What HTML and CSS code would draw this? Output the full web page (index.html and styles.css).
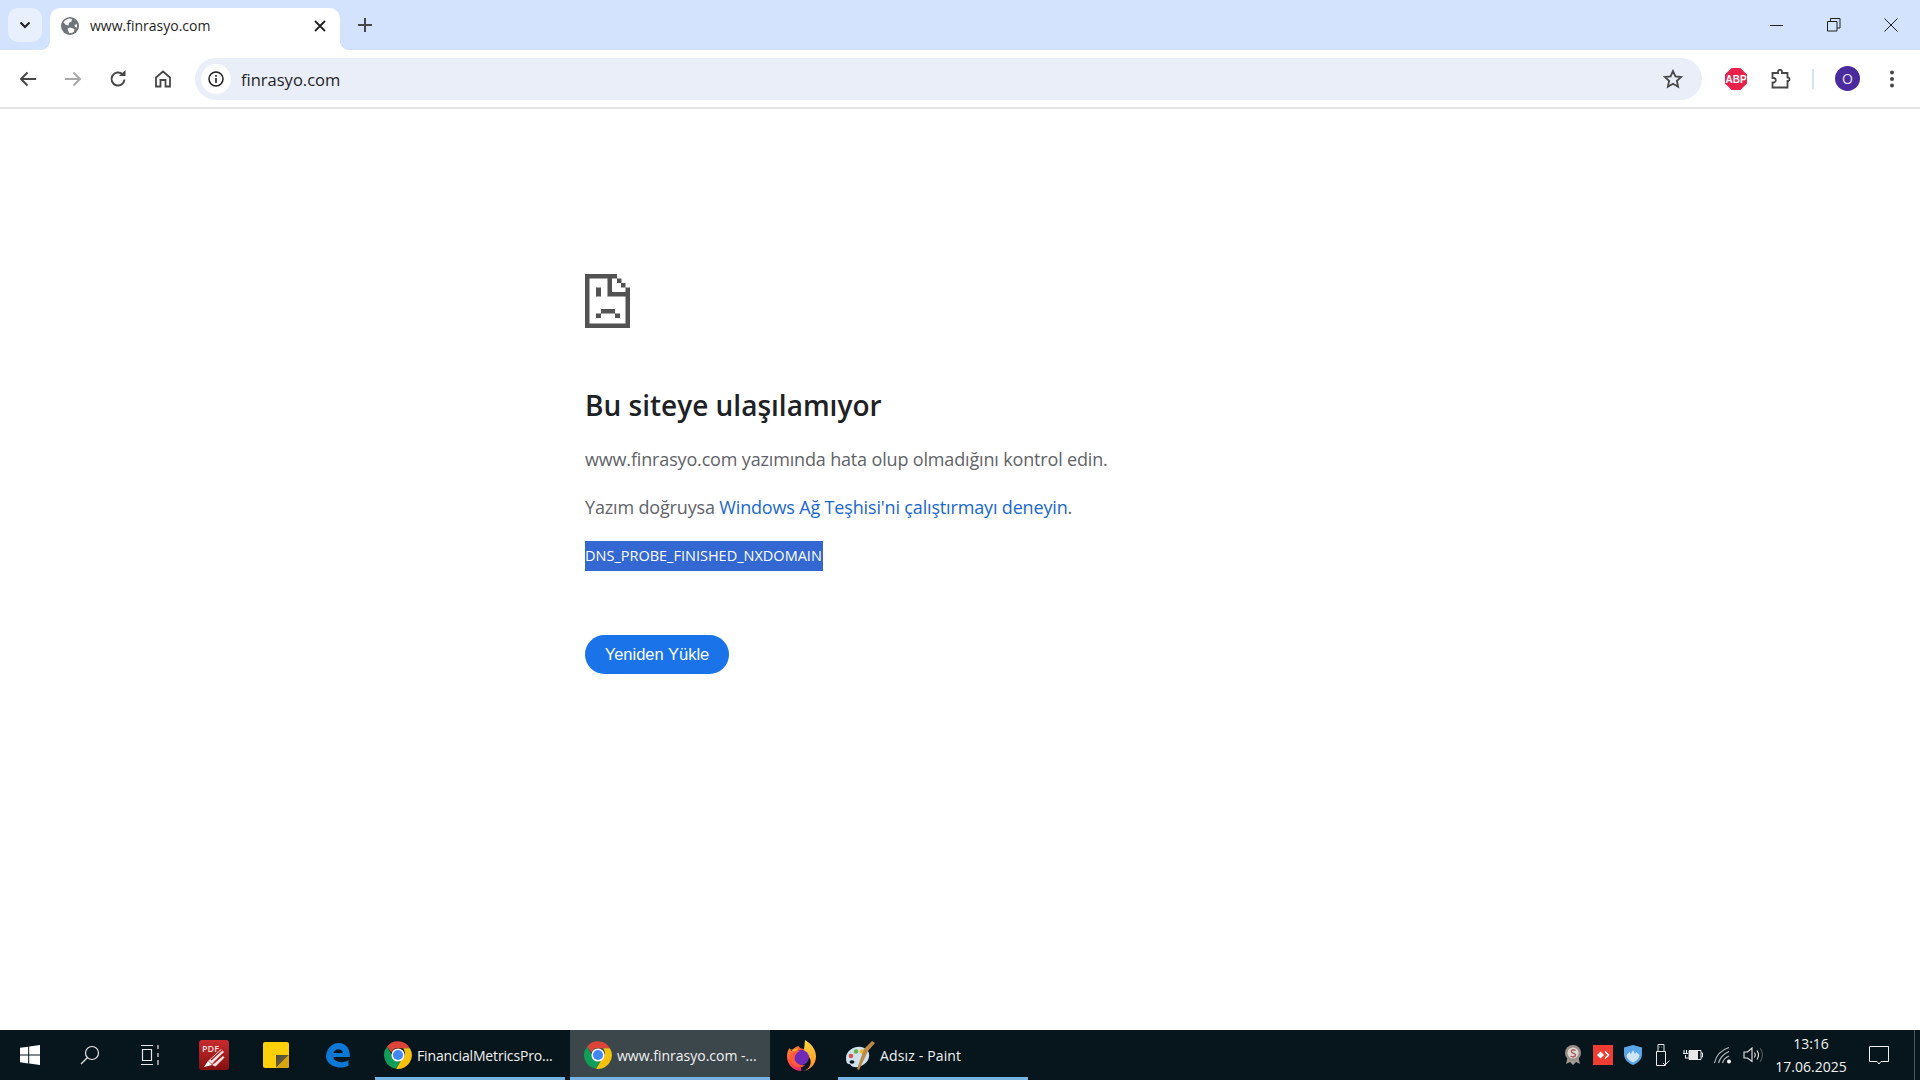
FILE: index.html
```html
<!DOCTYPE html>
<html lang="tr">
<head>
  <meta charset="UTF-8">
  <title>www.finrasyo.com</title>
  <link rel="stylesheet" href="styles.css">
</head>
<body>
  <svg class="defs" width="0" height="0">
    <defs>
      <linearGradient id="pdfRed" x1="0" y1="0" x2="0" y2="1"><stop offset="0" stop-color="#c92b2e"/><stop offset="1" stop-color="#85100f"/></linearGradient>
      <linearGradient id="foxBody" x1="0" y1="0" x2="0.7" y2="1"><stop offset="0" stop-color="#ff9a2e"/><stop offset="0.55" stop-color="#ff4a3d"/><stop offset="1" stop-color="#e3257d"/></linearGradient>
      <linearGradient id="foxTop" x1="0.5" y1="0" x2="0.6" y2="1"><stop offset="0" stop-color="#ffd83a"/><stop offset="1" stop-color="#ff8a2a"/></linearGradient>
      <linearGradient id="stickyFold" x1="0" y1="0" x2="1" y2="1"><stop offset="0" stop-color="#4a4a48"/><stop offset="1" stop-color="#8a6d1c"/></linearGradient>
    </defs>
    <symbol id="chrome" viewBox="0 0 48 48">
      <path fill="#db4437" d="M24 2a22 22 0 0 1 19 11H24a11 11 0 0 0-10.500 7.500L6.500 10.500A22 22 0 0 1 24 2z"/>
      <path fill="#0f9d58" d="M6.500 10.500l9.700 17A11 11 0 0 0 28 34.300L21 46A22 22 0 0 1 6.500 10.500z"/>
      <path fill="#f4c20d" d="M43 13a22 22 0 0 1-22 33l10-17a11 11 0 0 0 1-16z"/>
      <circle cx="24" cy="24" r="10.500" fill="#fff"/>
      <circle cx="24" cy="24" r="8" fill="#4285f4"/>
    </symbol>
  </svg>

  <div class="tabstrip">
    <div class="tab-search">
      <svg width="14" height="14" viewBox="0 0 14 14"><path d="M2.500 4.500L7 9l4.500-4.500" fill="none" stroke="#1f1f1f" stroke-width="2"/></svg>
    </div>
    <div class="tab">
      <svg class="favicon" width="18" height="18" viewBox="0 0 18 18"><circle cx="9" cy="9" r="9" fill="#70757a"/><path fill="#fff" d="M8 1.500C6 2 3.500 3.500 2.500 5.500L5 8l2.500.5L8 6l2.500-1.500L11 2zM9 10.500l-2.500 1 1.500 4.500c2 .3 3.500-.2 5-1.200l.5-2.800zM16 7l-2.500 1 .5 2 2 .5z"/></svg>
      <span class="tab-title">www.finrasyo.com</span>
      <svg class="tab-close" width="12" height="12" viewBox="0 0 12 12"><path d="M1 1l10 10M11 1L1 11" stroke="#1f1f1f" stroke-width="1.800"/></svg>
    </div>
    <svg class="new-tab" width="14" height="14" viewBox="0 0 14 14"><path d="M7 0v14M0 7h14" stroke="#474747" stroke-width="2"/></svg>
    <div class="win-controls">
      <svg width="14" height="14" viewBox="0 0 14 14"><path d="M0 7.500h13" stroke="#1f1f1f"/></svg>
      <svg width="14" height="14" viewBox="0 0 14 14"><path d="M.5 3.500h9.500v9.500H.5zM3.500 3.500V.5h9.500v9.500H10" fill="none" stroke="#1f1f1f"/></svg>
      <svg width="14" height="14" viewBox="0 0 14 14"><path d="M.5.500l13 13M13.500.5l-13 13" stroke="#1f1f1f"/></svg>
    </div>
  </div>

  <div class="toolbar">
    <div class="nav-btn">
      <svg width="18" height="16" viewBox="0 0 18 16"><path d="M17 8H2M8.500 1.500L2 8l6.500 6.500" fill="none" stroke="#474747" stroke-width="2"/></svg>
    </div>
    <div class="nav-btn">
      <svg width="18" height="16" viewBox="0 0 18 16"><path d="M1 8h15M9.500 1.500L16 8l-6.500 6.500" fill="none" stroke="#a8a8a8" stroke-width="2"/></svg>
    </div>
    <div class="nav-btn">
      <svg width="18" height="18" viewBox="0 0 18 18"><path d="M15.500 9.500A6.500 6.500 0 1 1 13.500 4.300" fill="none" stroke="#474747" stroke-width="2"/><path d="M10 6h6.500V0z" fill="#474747"/></svg>
    </div>
    <div class="nav-btn">
      <svg width="18" height="18" viewBox="0 0 18 18"><path d="M2 7.500L9 1.500l7 6V16.500h-4.500V10h-5v6.500H2z" fill="none" stroke="#474747" stroke-width="1.800"/></svg>
    </div>
    <div class="omnibox">
      <div class="site-info">
        <svg width="16" height="16" viewBox="0 0 16 16"><circle cx="8" cy="8" r="7" fill="none" stroke="#1f1f1f" stroke-width="1.500"/><path d="M8 7v5M8 4v1.800" stroke="#1f1f1f" stroke-width="1.600"/></svg>
      </div>
      <span class="url">finrasyo.com</span>
      <svg class="star" width="20" height="20" viewBox="0 0 20 20"><path d="M10 2l2.400 5.400 5.800.6-4.300 3.900 1.200 5.800L10 14.700l-5.100 3 1.200-5.800L1.800 8l5.800-.6z" fill="none" stroke="#474747" stroke-width="1.800"/></svg>
    </div>
    <div class="toolbar-end">
      <div class="abp">ABP</div>
      <svg class="ext" width="20" height="20" viewBox="0 0 20 20"><path d="M1.500 4H7V2.800a2 2 0 0 1 4 0V4h5.500v4.500h1a2 2 0 0 1 0 3.500h-1v6.500H1.500v-5H3a2.300 2.300 0 0 0 0-4.500H1.500z" fill="none" stroke="#474747" stroke-width="1.800"/></svg>
      <div class="tb-sep"></div>
      <div class="avatar">O</div>
      <svg class="menu" width="6" height="18" viewBox="0 0 6 18"><circle cx="3" cy="2.500" r="2" fill="#474747"/><circle cx="3" cy="9" r="2" fill="#474747"/><circle cx="3" cy="15.500" r="2" fill="#474747"/></svg>
    </div>
  </div>

  <main class="page">
    <svg class="sad-page" width="45" height="54" viewBox="0 0 45 54">
      <path fill="#535353" d="M0 0h32v4.500H4.500v45h36V22.500H22.500V0H27v18h18v36H0z"/>
      <path fill="#535353" d="M32 4.500h4.500V9H32zM36 9h4.500v4.500H36zM40.500 13.500H45V18h-4.500zM11 13.500h5v9h-5zM16 35h14v4.500H16zM11 39.500h5V44h-5zM30 39.500h5V44h-5z"/>
    </svg>
    <h1>Bu siteye ulaşılamıyor</h1>
    <p>www.finrasyo.com yazımında hata olup olmadığını kontrol edin.</p>
    <p>Yazım doğruysa <a href="#">Windows Ağ Teşhisi'ni çalıştırmayı deneyin</a>.</p>
    <div class="error-code">DNS_PROBE_FINISHED_NXDOMAIN</div>
    <button class="reload">Yeniden Yükle</button>
  </main>

  <footer class="taskbar">
    <div class="task-cell">
      <svg width="20" height="20" viewBox="0 0 20 20"><path fill="#fff" d="M0 2.800l8.200-1.100v7.900H0zM9.200 1.500L20 0v9.600H9.200zM0 10.500h8.200v7.900L0 17.200zM9.200 10.500H20V20L9.200 18.500z"/></svg>
    </div>
    <div class="task-cell">
      <svg width="20" height="20" viewBox="0 0 20 20"><circle cx="12" cy="8" r="6.500" fill="none" stroke="#e8e8e8" stroke-width="1.200"/><path d="M7.500 12.500L1 19" stroke="#e8e8e8" stroke-width="1.200"/></svg>
    </div>
    <div class="task-cell">
      <svg width="20" height="20" viewBox="0 0 20 20"><path d="M1 .5h12M1 19.500h12M2.500 4.500h9v11h-9zM18 0v4M18 8v4M18 15v5" fill="none" stroke="#e8e8e8" stroke-width="1.200"/></svg>
    </div>
    <div class="task-cell task-app task-pdf">
      <svg width="30" height="30" viewBox="0 0 30 30"><rect width="30" height="30" rx="3" fill="url(#pdfRed)"/><path d="M9 21l13-12 3 3-12 12zM13 25l11-9 1.500 1.500-9 9z" fill="#f6dfdf"/><path d="M12 20l11-10M15 23l9-9" stroke="#a81c20" stroke-width="1.200"/><path d="M5 27l4-6 4 4z" fill="#fff"/></svg>
      <span class="pdf-label">PDF</span>
    </div>
    <div class="task-cell task-app">
      <svg width="26" height="26" viewBox="0 0 26 26"><rect width="26" height="26" rx="2" fill="#fdd009"/><path fill="url(#stickyFold)" d="M13 26V13h13v0L13 26z"/><path fill="#d9a50f" d="M26 13v11a2 2 0 0 1-2 2H13z"/></svg>
    </div>
    <div class="task-cell task-app">
      <svg width="24" height="25" viewBox="0 0 24 25"><path fill="#0a78d4" d="M12.500 0C20 0 24 5.500 24 14H7.500c.3 5 8.500 7 15 3.200v5.600C14 27 1 23.500 0 14 0 6 6 0 12.500 0zM7.500 10h9.300c0-5-8.500-5.200-9.300 0z"/></svg>
    </div>
    <div class="task-item task-open task-first">
      <svg width="30" height="30"><use href="#chrome"/></svg>
      <span>FinancialMetricsPro...</span>
    </div>
    <div class="task-item task-open task-active">
      <svg width="30" height="30"><use href="#chrome"/></svg>
      <span>www.finrasyo.com -...</span>
    </div>
    <div class="task-cell task-fox">
      <svg width="29" height="31" viewBox="0 0 29 31"><path fill="url(#foxBody)" d="M14.500 31A14.500 14.500 0 0 1 0 16.500C0 13 1 10 2.500 8l2 3c1.500-2.500 4-4 7-5 1 3 5 2 6.500 4-3 0-6 1-7 3z"/><path fill="url(#foxTop)" d="M18 0c6 3.500 11 9 11 16.500A14.500 14.500 0 0 1 14.500 31c6 0 10-5 9-11-1-4-5-7-7-9 1-3 1-7 1.500-11z"/><circle cx="14.500" cy="17.500" r="7.500" fill="#6f2bb8"/><path fill="#ff5a3c" d="M2.500 15c2-3 7-4.500 10-3.500-3 1-5 3.500-5 7.500 1 4 5 7 11 6-6 5-15 2-16-10z"/><path fill="#ffb52e" d="M3 9c2 1 5 1 8-1 0 2-2 3-4 3.500z"/></svg>
    </div>
    <div class="task-item task-open task-paint">
      <svg width="30" height="30" viewBox="0 0 30 30"><path d="M1 18C1 11 9 6 16 7c6 1 9 5 8 10-1 6-8 11-15 10-3 0-3-3-5-3s-3-2-3-6z" fill="#cfe2ee"/><ellipse cx="7" cy="22" rx="2.500" ry="1.800" fill="#07151c"/><circle cx="6" cy="16" r="2.300" fill="#d9534f"/><circle cx="11" cy="11.500" r="2.300" fill="#6cb33f"/><circle cx="17" cy="11.500" r="2.300" fill="#efb82e"/><path d="M27 1l3 2-7 8-9 19-2-1 7-20z" fill="#b98a4a"/></svg>
      <span>Adsız - Paint</span>
    </div>
    <div class="tray">
      <div class="tray-cell">
        <svg width="18" height="20" viewBox="0 0 18 20"><path d="M4 11l-2 8 4-2 3 3 3-3 4 2-2-8z" fill="#a39c94"/><circle cx="9" cy="8" r="8" fill="#9a8f88"/><circle cx="9" cy="8" r="5.500" fill="#e0d8d4"/><path d="M11.500 5.500c-2-1.500-5-.5-4 1.500s4 1 4 3-3 2.500-5 1" fill="none" stroke="#a5605c" stroke-width="1.500"/></svg>
      </div>
      <div class="tray-cell">
        <svg width="20" height="20" viewBox="0 0 20 20"><rect width="20" height="20" fill="#ee3d33"/><path d="M4 10l3.500-3.500L11 10l-3.500 3.500z" fill="#fff"/><path d="M12 6.500l3.500 3.500-3.500 3.500" fill="none" stroke="#fff" stroke-width="1.500"/></svg>
      </div>
      <div class="tray-cell">
        <svg width="18" height="20" viewBox="0 0 18 20"><path d="M9 0l9 2.500V9c0 5.500-4 9-9 11-5-2-9-5.500-9-11V2.500z" fill="#5aa5e8"/><path d="M2.500 10l3-3 1.500 2 2-4 2 4 1.500-2 3 3c0 3-3 6-6.500 7.500C5.500 16 2.500 13 2.500 10z" fill="#cfe6fa"/></svg>
      </div>
      <div class="tray-cell">
        <svg width="16" height="22" viewBox="0 0 16 22"><path d="M1.500 7.500h9v14h-9zM3 7.500V.5h6v7M4.500 3h.5M6.500 3h.5M8 19l2 2 4.500-4.500" fill="none" stroke="#e8e8e8"/></svg>
      </div>
      <div class="tray-cell">
        <svg width="20" height="14" viewBox="0 0 20 14"><path d="M6 2.500h12v9H6zM18 5h1.500v4H18" fill="none" stroke="#e8e8e8"/><rect x="6" y="3" width="9" height="8" fill="#e8e8e8"/><path d="M1 2v3M3.500 2v3M0 5.500h5M2.500 7v3h3" fill="none" stroke="#e8e8e8" stroke-width="1.100"/></svg>
      </div>
      <div class="tray-cell">
        <svg width="18" height="17" viewBox="0 0 18 17"><path d="M.5 16C2 9 7 3 15 .5M4.500 16C6 11 9 7 15 4.500M8.500 16c.8-3 3-5.500 6.500-7" fill="none" stroke="#b8bcbe" stroke-width="1.100"/><circle cx="15" cy="14.500" r="2" fill="#fff"/></svg>
      </div>
      <div class="tray-cell">
        <svg width="20" height="16" viewBox="0 0 20 16"><path d="M1 5h3.500L9 1v13.500L4.500 11H1z" fill="none" stroke="#e8e8e8" stroke-width="1.100"/><path d="M11.500 5.500c1 1.500 1 3.500 0 5M14 3.500c2 3 2 6 0 9" fill="none" stroke="#e8e8e8" stroke-width="1.100"/><path d="M17 1c3 4 3 9.500 0 14" fill="none" stroke="#555" stroke-width="1.100"/></svg>
      </div>
    </div>
    <div class="clock">
      <span>13:16</span>
      <span>17.06.2025</span>
    </div>
    <div class="notify">
      <svg width="20" height="19" viewBox="0 0 20 19"><path d="M.5.500h19v15H12l-2 2.500-2-2.500H.5z" fill="none" stroke="#f2f2f2"/></svg>
    </div>
    <div class="show-desktop"></div>
  </footer>
</body>
</html>
```
FILE: styles.css
```css
* {
  box-sizing: border-box;
}
html, body {
  height: 100%;
}
body {
  margin: 0;
  display: flex;
  flex-direction: column;
  height: 1080px;
  overflow: hidden;
  background-color: #fff;
  font-family: 'Open Sans', 'Noto Sans', sans-serif;
  color: #1f1f1f;
}
svg {
  display: block;
  flex-shrink: 0;
}
.defs {
  position: absolute;
}

/* tab strip */
.tabstrip {
  height: 50px;
  flex-shrink: 0;
  display: flex;
  align-items: flex-end;
  background-color: #d3e3fd;
  padding-left: 8px;
}
.tab-search {
  width: 34px;
  height: 34px;
  margin-bottom: 8px;
  display: flex;
  align-items: center;
  justify-content: center;
  background-color: #e8f0fd;
  border-radius: 10px;
}
.tab {
  position: relative;
  width: 290px;
  height: 42px;
  margin-left: 8px;
  padding: 0 14px 7px 11px;
  display: flex;
  align-items: center;
  background-color: #fff;
  border-radius: 10px 10px 0 0;
}
.tab::before,
.tab::after {
  content: '';
  position: absolute;
  bottom: 0;
  width: 10px;
  height: 10px;
}
.tab::before {
  left: -10px;
  background: radial-gradient(circle at 0 0, transparent 10px, #fff 10.500px);
}
.tab::after {
  right: -10px;
  background: radial-gradient(circle at 100% 0, transparent 10px, #fff 10.500px);
}
.favicon {
  margin-right: 11px;
}
.tab-title {
  flex: 1;
  font-size: 14px;
  color: #1f1f1f;
}
.new-tab {
  margin: 0 0 18px 18px;
}
.win-controls {
  margin-left: auto;
  display: flex;
  gap: 43px;
  padding-right: 22px;
  margin-bottom: 18px;
}

/* toolbar */
.toolbar {
  height: 59px;
  flex-shrink: 0;
  display: flex;
  align-items: center;
  background-color: #fff;
  border-bottom: 2px solid #e3e3e3;
  border-radius: 10px 10px 0 0;
  padding: 1px 0 0 5px;
}
.nav-btn {
  width: 45px;
  display: flex;
  justify-content: center;
}
.omnibox {
  width: 1507px;
  height: 42px;
  margin-left: 10px;
  padding: 0 19px 0 6px;
  display: flex;
  align-items: center;
  background-color: #e9eef8;
  border-radius: 21px;
}
.site-info {
  width: 30px;
  height: 30px;
  display: flex;
  align-items: center;
  justify-content: center;
  background-color: #fff;
  border-radius: 50%;
}
.url {
  flex: 1;
  margin-left: 10px;
  font-size: 16.500px;
}
.toolbar-end {
  flex: 1;
  display: flex;
  align-items: center;
  padding-left: 23px;
}
.abp {
  width: 22px;
  height: 22px;
  display: flex;
  align-items: center;
  justify-content: center;
  background-color: #e8214a;
  clip-path: polygon(30% 0, 70% 0, 100% 30%, 100% 70%, 70% 100%, 30% 100%, 0 70%, 0 30%);
  color: #fff;
  font-family: 'Liberation Sans', sans-serif;
  font-size: 10px;
  font-weight: bold;
}
.ext {
  margin-left: 24px;
}
.tb-sep {
  width: 2px;
  height: 20px;
  margin-left: 21px;
  background-color: #d3e3fd;
}
.avatar {
  width: 25px;
  height: 25px;
  margin: -1px 0 0 21px;
  display: flex;
  align-items: center;
  justify-content: center;
  background-color: #4b2a9e;
  border-radius: 50%;
  color: #e8e4f5;
  font-size: 14px;
}
.menu {
  margin-left: 29px;
}

/* error page */
.page {
  flex: 1;
  padding: 165px 0 0 585px;
  display: flex;
  flex-direction: column;
  align-items: flex-start;
}
h1 {
  margin: 53px 0 0;
  font-size: 28px;
  line-height: 48px;
  font-weight: 600;
  color: #202124;
}
p {
  margin: 15px 0 0;
  font-size: 18px;
  line-height: 30px;
  letter-spacing: -0.160px;
  color: #5f6368;
}
p + p {
  margin-top: 18px;
}
a {
  color: #1967d2;
  text-decoration: none;
}
.error-code {
  margin-top: 19px;
  height: 30px;
  line-height: 30px;
  padding: 0 1px 0 0;
  background-color: #3367d1;
  color: #fff;
  font-size: 14.500px;
}
.reload {
  margin-top: 64px;
  width: 144px;
  height: 39px;
  border: none;
  border-radius: 20px;
  background-color: #1a73e8;
  color: #fff;
  font-family: 'Liberation Sans', sans-serif;
  font-size: 16.500px;
}

/* taskbar */
.taskbar {
  height: 50px;
  flex-shrink: 0;
  display: flex;
  align-items: stretch;
  background-color: #07151c;
  color: #f2f2f2;
}
.task-cell {
  width: 60px;
  display: flex;
  align-items: center;
  justify-content: center;
}
.task-app {
  width: 62px;
}
.task-pdf {
  position: relative;
  margin-left: 3px;
}
.pdf-label {
  position: absolute;
  left: 19px;
  top: 12px;
  font-size: 9px;
  font-weight: 600;
  color: #f3d9d9;
}
.task-item {
  display: flex;
  align-items: center;
  gap: 4px;
  font-size: 14px;
  white-space: nowrap;
}
.task-open {
  border-bottom: 3px solid #76b3e2;
  padding-top: 3px;
}
.task-first {
  width: 190px;
  margin-left: 6px;
  padding-left: 8px;
  letter-spacing: -0.150px;
}
.task-active {
  width: 200px;
  margin-left: 5px;
  padding-left: 13px;
  background-color: #3c474c;
}
.task-fox {
  width: 62px;
}
.task-paint {
  width: 190px;
  margin-left: 6px;
  padding-left: 7px;
  gap: 5px;
  letter-spacing: 0.150px;
}
.tray {
  margin-left: auto;
  display: flex;
  align-items: center;
}
.tray-cell {
  width: 30px;
  display: flex;
  justify-content: center;
}
.clock {
  width: 86px;
  display: flex;
  flex-direction: column;
  align-items: center;
  justify-content: center;
  gap: 5px;
  font-size: 14px;
  line-height: 18px;
}
.notify {
  width: 50px;
  display: flex;
  align-items: center;
  justify-content: center;
}
.show-desktop {
  width: 6px;
  margin-left: 10px;
  border-left: 1px solid #4a555a;
}
```
